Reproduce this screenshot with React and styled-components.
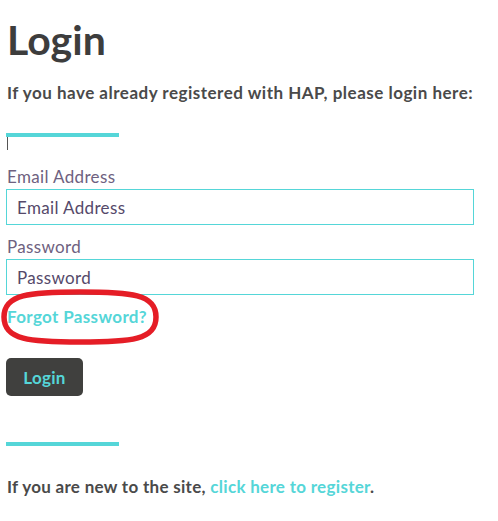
import styled, { createGlobalStyle } from "styled-components";

const GlobalStyle = createGlobalStyle`
  body {
    margin: 0;
    background: #ffffff;
    font-family: "Lato", "Liberation Sans", sans-serif;
  }
`;

const Page = styled.div`
  padding: 14px 25px 0 6px;
  width: 498px;
  box-sizing: border-box;
`;

const Title = styled.h1`
  margin: 0 0 0 1px;
  font-size: 41px;
  font-weight: 700;
  color: #3d3d3d;
  line-height: 52px;
`;

const Lead = styled.p`
  margin: 17px 0 0 1px;
  font-size: 17px;
  line-height: 20px;
  font-weight: 700;
  color: #4a4a4a;
  letter-spacing: 0.5px;
  white-space: nowrap;
`;

const Rule = styled.div`
  width: 113px;
  height: 4px;
  background: #55d6d8;
  margin-top: ${(p) => p.$top}px;
`;

const Caret = styled.div`
  width: 1px;
  height: 13px;
  background: #555;
  margin-left: 1px;
`;

const Form = styled.form`
  display: flex;
  flex-direction: column;
  margin-top: 17px;
`;

const Label = styled.label`
  font-size: 17px;
  letter-spacing: 0.35px;
  color: #6e6180;
  margin-left: 1px;
  line-height: 20px;
`;

const Input = styled.input`
  box-sizing: border-box;
  width: 468px;
  height: 36px;
  margin: 2px 0 12px;
  border: 1px solid #55d6d8;
  border-radius: 0;
  padding: 0 10px;
  font-family: inherit;
  font-size: 17px;
  letter-spacing: 0.35px;
  color: #4b3f5a;
  outline: none;
  &::placeholder {
    color: #55496a;
  }
`;

const ForgotRow = styled.div`
  position: relative;
  align-self: flex-start;
`;

const Forgot = styled.a`
  display: block;
  margin-left: 1px;
  font-size: 17px;
  letter-spacing: 0.35px;
  font-weight: 700;
  color: #55d6d8;
  text-decoration: none;
  line-height: 20px;
`;

const Highlight = styled.svg`
  position: absolute;
  left: -6px;
  top: -18px;
  pointer-events: none;
`;

const Button = styled.button`
  align-self: flex-start;
  margin-top: 31px;
  width: 77px;
  height: 38px;
  border: none;
  border-radius: 5px;
  background: #40403e;
  color: #55d6d8;
  font-family: inherit;
  font-size: 17px;
  letter-spacing: 0.3px;
  font-weight: 700;
`;

const Footer = styled.p`
  margin: 31px 0 0 1px;
  font-size: 17px;
  line-height: 20px;
  letter-spacing: 0.3px;
  font-weight: 700;
  color: #4a4a4a;
`;

const TealLink = styled.a`
  color: #55d6d8;
  text-decoration: none;
`;

const App = () => {
  return (
    <>
      <GlobalStyle />
      <Page>
        <Title>Login</Title>
        <Lead>If you have already registered with HAP, please login here:</Lead>
        <Rule $top={30} />
        <Caret />
        <Form>
          <Label>Email Address</Label>
          <Input placeholder="Email Address" />
          <Label>Password</Label>
          <Input placeholder="Password" type="text" />
          <ForgotRow>
            <Forgot href="#">Forgot Password?</Forgot>
            <Highlight width="164" height="56" viewBox="0 0 164 56">
              <path
                d="M4 28 C4 5 30 3 80 3 C131 3 156 5 156 28 C156 51 131 53 80 53 C30 53 4 51 4 28 Z"
                fill="none"
                stroke="#e51d26"
                strokeWidth="5.5"
              />
            </Highlight>
          </ForgotRow>
          <Button type="button">Login</Button>
        </Form>
        <Rule $top={46} />
        <Footer>
          If you are new to the site, <TealLink href="#">click here to register</TealLink>.
        </Footer>
      </Page>
    </>
  );
};

export default App;
